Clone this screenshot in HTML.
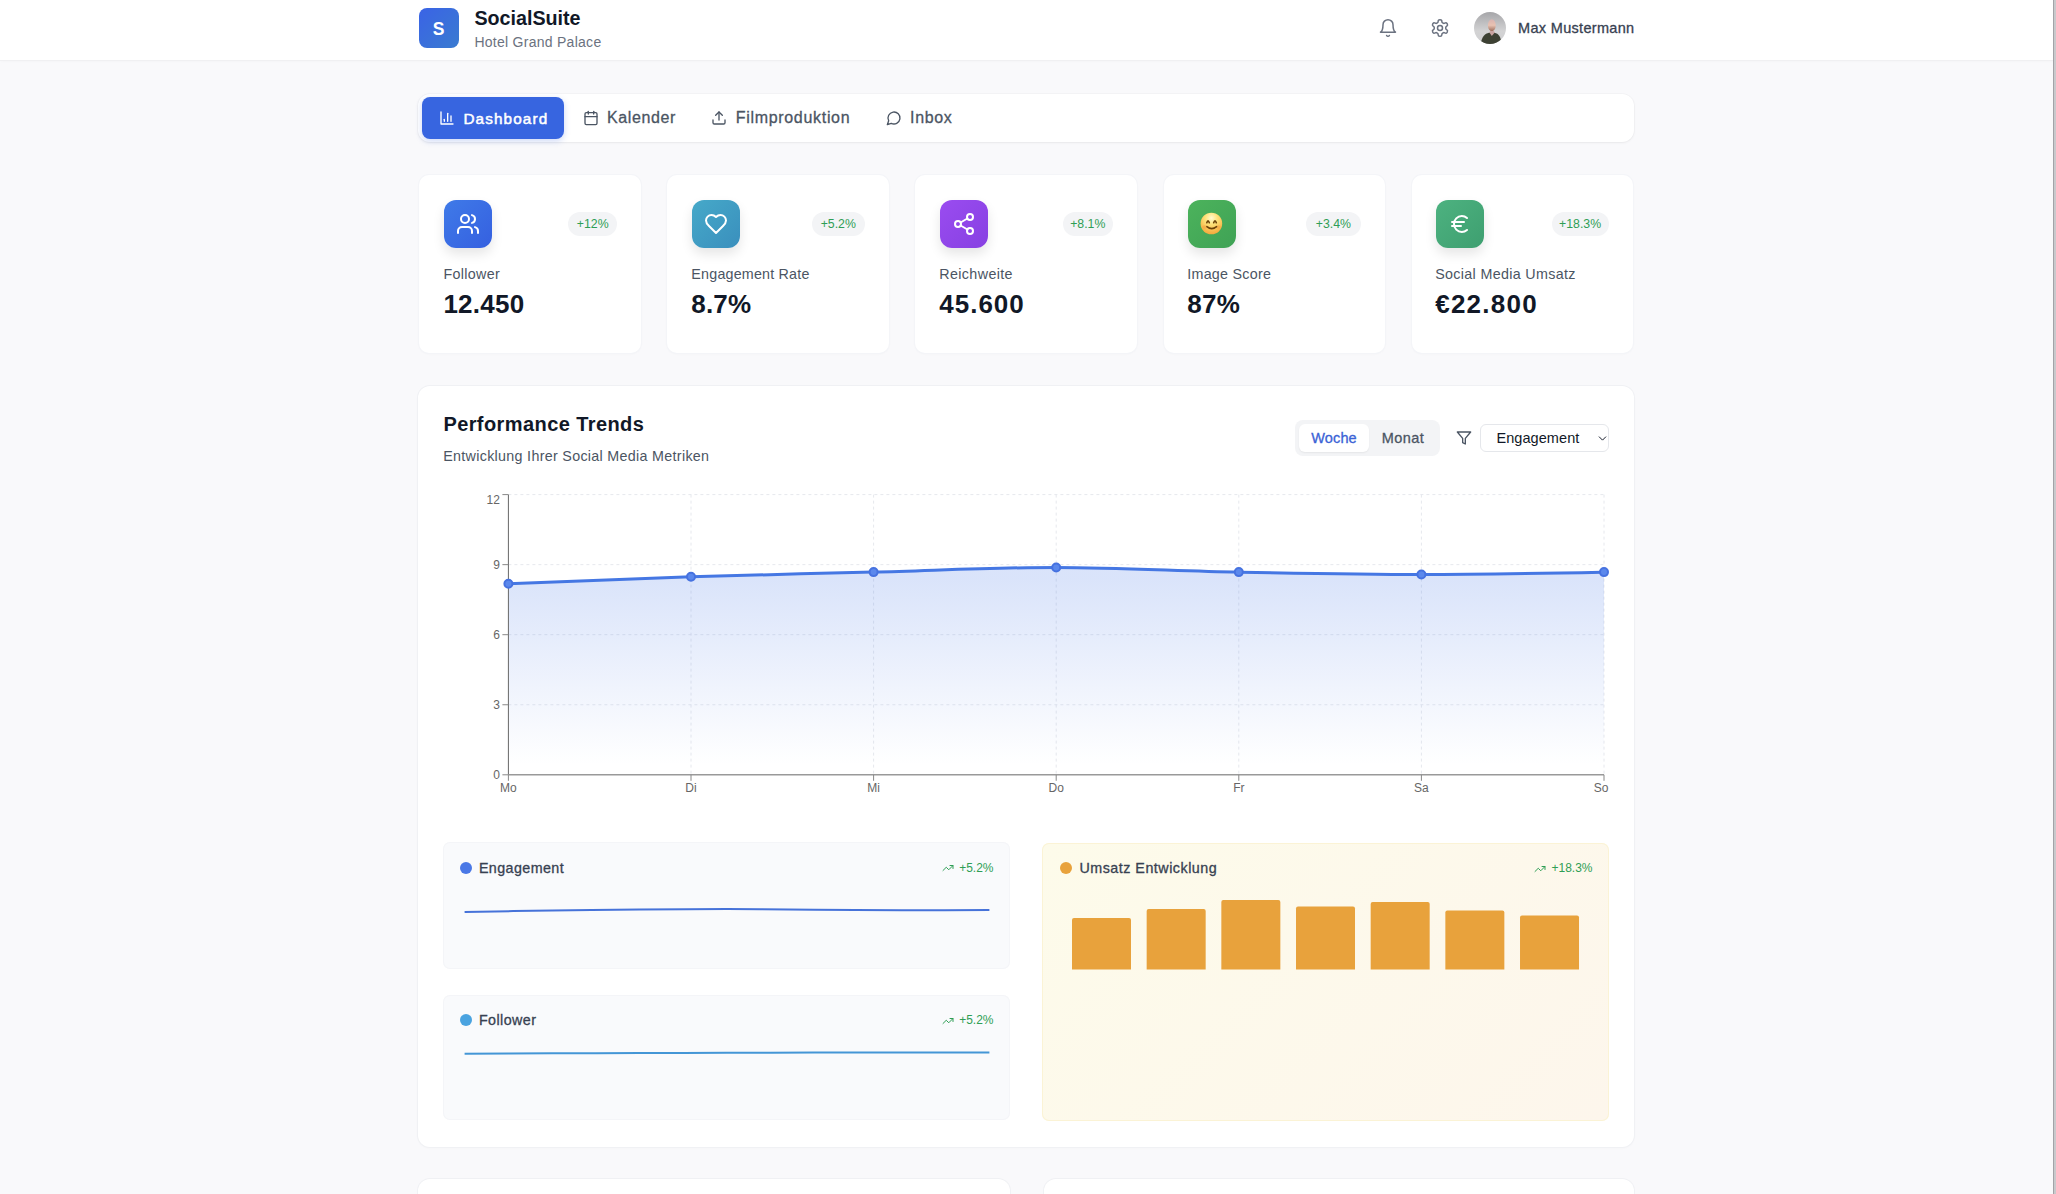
<!DOCTYPE html>
<html><head><meta charset="utf-8"><style>
html,body{margin:0;padding:0;}
body{width:2056px;height:1194px;overflow:hidden;background:#f9f9fb;font-family:"Liberation Sans",sans-serif;position:relative;}
.t{position:absolute;white-space:nowrap;}
.b{position:absolute;}
</style></head><body>
<div class="b" style="left:0px;top:0px;width:2056px;height:60px;background:#fff;box-shadow:0 1px 3px rgba(0,0,0,0.03);"></div>
<div class="b" style="left:0px;top:60px;width:2056px;height:1px;background:#f0f0f2;"></div>
<div class="b" style="left:419px;top:8px;width:40px;height:40px;border-radius:8px;background:linear-gradient(135deg,#3a63e6,#3a7bd0);"></div>
<div class="t" style="left:238.50px;width:400px;text-align:center;top:17.53px;font-size:17.5px;line-height:22px;font-weight:700;color:#fff;">S</div>
<div class="t" style="left:474.40px;top:6.17px;font-size:19.7px;line-height:25px;font-weight:700;color:#111827;">SocialSuite</div>
<div class="t" style="left:474.40px;top:33.15px;font-size:14px;line-height:18px;font-weight:400;color:#6b7280;letter-spacing:0.271px;">Hotel Grand Palace</div>
<svg class="b" style="left:1378px;top:18px;width:20px;height:20px;color:#6b7280" viewBox="0 0 24 24" fill="none" stroke="currentColor" stroke-width="1.8" stroke-linecap="round" stroke-linejoin="round"><path d="M6 8a6 6 0 0 1 12 0c0 7 3 9 3 9H3s3-2 3-9"/><path d="M10.3 21a1.94 1.94 0 0 0 3.4 0"/></svg>
<svg class="b" style="left:1430px;top:18px;width:20px;height:20px;color:#6b7280" viewBox="0 0 24 24" fill="none" stroke="currentColor" stroke-width="1.8" stroke-linecap="round" stroke-linejoin="round"><path d="M12.22 2h-.44a2 2 0 0 0-2 2v.18a2 2 0 0 1-1 1.73l-.43.25a2 2 0 0 1-2 0l-.15-.08a2 2 0 0 0-2.73.73l-.22.38a2 2 0 0 0 .73 2.73l.15.1a2 2 0 0 1 1 1.72v.51a2 2 0 0 1-1 1.74l-.15.09a2 2 0 0 0-.73 2.73l.22.38a2 2 0 0 0 2.73.73l.15-.08a2 2 0 0 1 2 0l.43.25a2 2 0 0 1 1 1.73V20a2 2 0 0 0 2 2h.44a2 2 0 0 0 2-2v-.18a2 2 0 0 1 1-1.73l.43-.25a2 2 0 0 1 2 0l.15.08a2 2 0 0 0 2.73-.73l.22-.39a2 2 0 0 0-.73-2.73l-.15-.08a2 2 0 0 1-1-1.74v-.5a2 2 0 0 1 1-1.74l.15-.09a2 2 0 0 0 .73-2.73l-.22-.38a2 2 0 0 0-2.73-.73l-.15.08a2 2 0 0 1-2 0l-.43-.25a2 2 0 0 1-1-1.73V4a2 2 0 0 0-2-2z"/><circle cx="12" cy="12" r="3"/></svg>
<svg class="b" style="left:1474px;top:12px;width:32px;height:32px" viewBox="0 0 32 32">
<defs><linearGradient id="av" x1="0" y1="0" x2="0" y2="1"><stop offset="0" stop-color="#a6a6a9"/><stop offset="0.6" stop-color="#d3d3d4"/><stop offset="1" stop-color="#cfcfd1"/></linearGradient>
<linearGradient id="hd" x1="0" y1="0" x2="0" y2="1"><stop offset="0" stop-color="#d9b3b0"/><stop offset="0.5" stop-color="#e8c2b2"/><stop offset="1" stop-color="#9a6a58"/></linearGradient>
<clipPath id="avc"><circle cx="16" cy="16" r="16"/></clipPath></defs>
<g clip-path="url(#avc)"><rect width="32" height="32" fill="url(#av)"/>
<ellipse cx="17.8" cy="13.3" rx="3.9" ry="6.1" fill="url(#hd)"/>
<path d="M6.5 34 C7 26 10.5 21.5 15 20.8 L20.5 20.8 C25 21.5 27.5 26 27.5 34 Z" fill="#3d4133"/>
<path d="M15.2 20.2 L17.8 24 L21 20.2 L19.5 19 L16.5 19 Z" fill="#c9a3a0"/></g></svg>
<div class="t" style="left:1518.10px;top:18.77px;font-size:14.5px;line-height:18px;font-weight:400;color:#374151;-webkit-text-stroke:0.3px #374151;letter-spacing:0.308px;">Max Mustermann</div>
<div class="b" style="left:418px;top:94px;width:1216px;height:48px;background:#fff;border-radius:12px;box-shadow:0 0 0 1px rgba(0,0,0,0.018), 0 1px 3px rgba(0,0,0,0.05);"></div>
<div class="b" style="left:422px;top:97px;width:142px;height:42px;background:#3765e0;border-radius:8px;box-shadow:0 2px 6px rgba(55,101,224,0.25);"></div>
<svg class="b" style="left:439px;top:110px;width:16px;height:16px;color:#fff" viewBox="0 0 24 24" fill="none" stroke="currentColor" stroke-width="2" stroke-linecap="round" stroke-linejoin="round"><path d="M3 3v18h18"/><path d="M18 17V9"/><path d="M13 17V5"/><path d="M8 17v-3"/></svg>
<div class="t" style="left:463.40px;top:108.60px;font-size:15.3px;line-height:19px;font-weight:400;color:#fff;-webkit-text-stroke:0.5px #fff;letter-spacing:1.125px;">Dashboard</div>
<svg class="b" style="left:582.5px;top:110px;width:16px;height:16px;color:#4b5563" viewBox="0 0 24 24" fill="none" stroke="currentColor" stroke-width="2" stroke-linecap="round" stroke-linejoin="round"><rect width="18" height="18" x="3" y="4" rx="2" ry="2"/><line x1="16" x2="16" y1="2" y2="6"/><line x1="8" x2="8" y1="2" y2="6"/><line x1="3" x2="21" y1="10" y2="10"/></svg>
<div class="t" style="left:606.90px;top:107.85px;font-size:16px;line-height:20px;font-weight:400;color:#4b5563;-webkit-text-stroke:0.3px #4b5563;letter-spacing:0.643px;">Kalender</div>
<svg class="b" style="left:711px;top:110px;width:16px;height:16px;color:#4b5563" viewBox="0 0 24 24" fill="none" stroke="currentColor" stroke-width="2" stroke-linecap="round" stroke-linejoin="round"><path d="M21 15v4a2 2 0 0 1-2 2H5a2 2 0 0 1-2-2v-4"/><polyline points="17 8 12 3 7 8"/><line x1="12" x2="12" y1="3" y2="15"/></svg>
<div class="t" style="left:735.70px;top:107.85px;font-size:16px;line-height:20px;font-weight:400;color:#4b5563;-webkit-text-stroke:0.3px #4b5563;letter-spacing:0.692px;">Filmproduktion</div>
<svg class="b" style="left:886px;top:110px;width:16px;height:16px;color:#4b5563" viewBox="0 0 24 24" fill="none" stroke="currentColor" stroke-width="2" stroke-linecap="round" stroke-linejoin="round"><path d="M7.9 20A9 9 0 1 0 4 16.1L2 22Z"/></svg>
<div class="t" style="left:910.10px;top:107.85px;font-size:16px;line-height:20px;font-weight:400;color:#4b5563;-webkit-text-stroke:0.3px #4b5563;letter-spacing:0.625px;">Inbox</div>
<div class="b" style="left:419.0px;top:175px;width:221.5px;height:178px;background:#fff;border-radius:10px;box-shadow:0 0 0 1px #f4f5f8, 0 1px 3px rgba(0,0,0,0.03);"></div>
<div class="b" style="left:444.0px;top:200px;width:48px;height:48px;border-radius:12px;background:linear-gradient(135deg,#3f7ae8,#3560e0);box-shadow:0 6px 12px rgba(0,0,0,0.10);"></div>
<svg class="b" style="left:456.0px;top:212px;width:24px;height:24px;color:#fff" viewBox="0 0 24 24" fill="none" stroke="currentColor" stroke-width="2" stroke-linecap="round" stroke-linejoin="round"><path d="M16 21v-2a4 4 0 0 0-4-4H6a4 4 0 0 0-4 4v2"/><circle cx="9" cy="7" r="4"/><path d="M22 21v-2a4 4 0 0 0-3-3.87"/><path d="M16 3.13a4 4 0 0 1 0 7.75"/></svg>
<div class="b" style="left:568.2px;top:212px;width:49px;height:24px;background:#f3f4f6;border-radius:12px;"></div>
<div class="t" style="left:392.70px;width:400px;text-align:center;top:217.24px;font-size:12.3px;line-height:15px;font-weight:400;color:#2f9e55;">+12%</div>
<div class="t" style="left:443.40px;top:265.04px;font-size:14.3px;line-height:18px;font-weight:400;color:#4b5563;letter-spacing:0.343px;">Follower</div>
<div class="t" style="left:443.40px;top:288.19px;font-size:26px;line-height:32px;font-weight:700;color:#111827;letter-spacing:0.240px;">12.450</div>
<div class="b" style="left:667.2px;top:175px;width:221.5px;height:178px;background:#fff;border-radius:10px;box-shadow:0 0 0 1px #f4f5f8, 0 1px 3px rgba(0,0,0,0.03);"></div>
<div class="b" style="left:691.95px;top:200px;width:48px;height:48px;border-radius:12px;background:linear-gradient(135deg,#46a9c9,#3a8fbd);box-shadow:0 6px 12px rgba(0,0,0,0.10);"></div>
<svg class="b" style="left:703.95px;top:212px;width:24px;height:24px;color:#fff" viewBox="0 0 24 24" fill="none" stroke="currentColor" stroke-width="2" stroke-linecap="round" stroke-linejoin="round"><path d="M19 14c1.49-1.46 3-3.21 3-5.5A5.5 5.5 0 0 0 16.5 3c-1.76 0-3 .5-4.5 2-1.5-1.5-2.74-2-4.5-2A5.5 5.5 0 0 0 2 8.5c0 2.3 1.5 4.05 3 5.5l7 7Z"/></svg>
<div class="b" style="left:811.5500000000001px;top:212px;width:53.5px;height:24px;background:#f3f4f6;border-radius:12px;"></div>
<div class="t" style="left:638.30px;width:400px;text-align:center;top:217.24px;font-size:12.3px;line-height:15px;font-weight:400;color:#2f9e55;">+5.2%</div>
<div class="t" style="left:691.35px;top:265.04px;font-size:14.3px;line-height:18px;font-weight:400;color:#4b5563;letter-spacing:0.200px;">Engagement Rate</div>
<div class="t" style="left:691.35px;top:288.19px;font-size:26px;line-height:32px;font-weight:700;color:#111827;letter-spacing:0.167px;">8.7%</div>
<div class="b" style="left:915.4px;top:175px;width:221.5px;height:178px;background:#fff;border-radius:10px;box-shadow:0 0 0 1px #f4f5f8, 0 1px 3px rgba(0,0,0,0.03);"></div>
<div class="b" style="left:939.9px;top:200px;width:48px;height:48px;border-radius:12px;background:linear-gradient(135deg,#9a4cf0,#8740e2);box-shadow:0 6px 12px rgba(0,0,0,0.10);"></div>
<svg class="b" style="left:951.9px;top:212px;width:24px;height:24px;color:#fff" viewBox="0 0 24 24" fill="none" stroke="currentColor" stroke-width="2" stroke-linecap="round" stroke-linejoin="round"><circle cx="18" cy="5" r="3"/><circle cx="6" cy="12" r="3"/><circle cx="18" cy="19" r="3"/><line x1="8.59" x2="15.42" y1="13.51" y2="17.49"/><line x1="15.41" x2="8.59" y1="6.51" y2="10.49"/></svg>
<div class="b" style="left:1062.6000000000001px;top:212px;width:50.3px;height:24px;background:#f3f4f6;border-radius:12px;"></div>
<div class="t" style="left:887.75px;width:400px;text-align:center;top:217.24px;font-size:12.3px;line-height:15px;font-weight:400;color:#2f9e55;">+8.1%</div>
<div class="t" style="left:939.30px;top:265.04px;font-size:14.3px;line-height:18px;font-weight:400;color:#4b5563;letter-spacing:0.367px;">Reichweite</div>
<div class="t" style="left:939.30px;top:288.19px;font-size:26px;line-height:32px;font-weight:700;color:#111827;letter-spacing:0.980px;">45.600</div>
<div class="b" style="left:1163.6px;top:175px;width:221.5px;height:178px;background:#fff;border-radius:10px;box-shadow:0 0 0 1px #f4f5f8, 0 1px 3px rgba(0,0,0,0.03);"></div>
<div class="b" style="left:1187.85px;top:200px;width:48px;height:48px;border-radius:12px;background:linear-gradient(135deg,#4cb35c,#3fa255);box-shadow:0 6px 12px rgba(0,0,0,0.10);"></div>
<svg class="b" style="left:1199.85px;top:212px;width:24px;height:24px" viewBox="0 0 24 24">
<defs><radialGradient id="sm" cx="50%" cy="25%" r="80%"><stop offset="0" stop-color="#fffbd0"/><stop offset="0.35" stop-color="#fde37a"/><stop offset="0.8" stop-color="#f6b548"/><stop offset="1" stop-color="#f0a43a"/></radialGradient></defs>
<circle cx="11.4" cy="11.5" r="10.8" fill="url(#sm)"/>
<ellipse cx="4.6" cy="15" rx="2.4" ry="1.8" fill="#f59a3c" opacity="0.45"/><ellipse cx="18.4" cy="15" rx="2.4" ry="1.8" fill="#f59a3c" opacity="0.45"/>
<path d="M6.8 10.8 Q8 6.6 9.3 10.8" stroke="#6b4208" stroke-width="1.6" fill="none" stroke-linecap="round"/>
<path d="M13.7 10.8 Q15 6.6 16.3 10.8" stroke="#6b4208" stroke-width="1.6" fill="none" stroke-linecap="round"/>
<path d="M6.9 14.6 Q11.7 18.6 16.6 14.6" stroke="#6b4208" stroke-width="1.5" fill="none" stroke-linecap="round"/></svg>
<div class="b" style="left:1306.15px;top:212px;width:54.6px;height:24px;background:#f3f4f6;border-radius:12px;"></div>
<div class="t" style="left:1133.45px;width:400px;text-align:center;top:217.24px;font-size:12.3px;line-height:15px;font-weight:400;color:#2f9e55;">+3.4%</div>
<div class="t" style="left:1187.25px;top:265.04px;font-size:14.3px;line-height:18px;font-weight:400;color:#4b5563;letter-spacing:0.260px;">Image Score</div>
<div class="t" style="left:1187.25px;top:288.19px;font-size:26px;line-height:32px;font-weight:700;color:#111827;letter-spacing:0.250px;">87%</div>
<div class="b" style="left:1411.8px;top:175px;width:221.5px;height:178px;background:#fff;border-radius:10px;box-shadow:0 0 0 1px #f4f5f8, 0 1px 3px rgba(0,0,0,0.03);"></div>
<div class="b" style="left:1435.8px;top:200px;width:48px;height:48px;border-radius:12px;background:linear-gradient(135deg,#4db280,#3e9f70);box-shadow:0 6px 12px rgba(0,0,0,0.10);"></div>
<svg class="b" style="left:1447.8px;top:212px;width:24px;height:24px;color:#fff" viewBox="0 0 24 24" fill="none" stroke="currentColor" stroke-width="2" stroke-linecap="round" stroke-linejoin="round"><path d="M4 10h12"/><path d="M4 14h9"/><path d="M19 6a7.7 7.7 0 0 0-5.2-2A7.9 7.9 0 0 0 6 12c0 4.4 3.5 8 7.8 8 2 0 3.8-.8 5.2-2"/></svg>
<div class="b" style="left:1551.6px;top:212px;width:57px;height:24px;background:#f3f4f6;border-radius:12px;"></div>
<div class="t" style="left:1380.10px;width:400px;text-align:center;top:217.24px;font-size:12.3px;line-height:15px;font-weight:400;color:#2f9e55;">+18.3%</div>
<div class="t" style="left:1435.20px;top:265.04px;font-size:14.3px;line-height:18px;font-weight:400;color:#4b5563;letter-spacing:0.333px;">Social Media Umsatz</div>
<div class="t" style="left:1435.20px;top:288.19px;font-size:26px;line-height:32px;font-weight:700;color:#111827;letter-spacing:1.250px;">€22.800</div>
<div class="b" style="left:418px;top:386px;width:1216px;height:761px;background:#fff;border-radius:12px;box-shadow:0 0 0 1px #f0f1f4, 0 1px 3px rgba(0,0,0,0.03);"></div>
<div class="t" style="left:443.40px;top:411.57px;font-size:20px;line-height:25px;font-weight:700;color:#111827;letter-spacing:0.412px;">Performance Trends</div>
<div class="t" style="left:443.20px;top:446.94px;font-size:14.3px;line-height:18px;font-weight:400;color:#4b5563;letter-spacing:0.305px;">Entwicklung Ihrer Social Media Metriken</div>
<div class="b" style="left:1295px;top:420px;width:145px;height:36px;background:#f3f4f6;border-radius:8px;"></div>
<div class="b" style="left:1299px;top:424px;width:70px;height:28px;background:#fff;border-radius:6px;box-shadow:0 1px 2px rgba(0,0,0,0.06);"></div>
<div class="t" style="left:1134.06px;width:400px;text-align:center;top:428.87px;font-size:14.5px;line-height:18px;font-weight:400;color:#3b63d6;-webkit-text-stroke:0.3px #3b63d6;letter-spacing:0.125px;">Woche</div>
<div class="t" style="left:1203.00px;width:400px;text-align:center;top:428.87px;font-size:14.5px;line-height:18px;font-weight:400;color:#4b5563;-webkit-text-stroke:0.3px #4b5563;letter-spacing:0.400px;">Monat</div>
<svg class="b" style="left:1455.7px;top:429.6px;width:16px;height:16px;color:#4b5563" viewBox="0 0 24 24" fill="none" stroke="currentColor" stroke-width="2" stroke-linecap="round" stroke-linejoin="round"><polygon points="22 3 2 3 10 12.46 10 19 14 21 14 12.46 22 3"/></svg>
<div class="b" style="left:1480px;top:424px;width:129px;height:28px;background:#fff;border:1px solid #e5e7eb;border-radius:6px;box-sizing:border-box;"></div>
<div class="t" style="left:1496.40px;top:428.87px;font-size:14.5px;line-height:18px;font-weight:400;color:#111827;letter-spacing:0.078px;">Engagement</div>
<svg class="b" style="left:1595.5px;top:431.5px;width:13px;height:13px;color:#111827" viewBox="0 0 24 24" fill="none" stroke="currentColor" stroke-width="1.8" stroke-linecap="round" stroke-linejoin="round"><path d="m6 9 6 6 6-6"/></svg>
<svg class="b" style="left:0;top:0;width:2056px;height:1194px" viewBox="0 0 2056 1194">
<defs><linearGradient id="ag" x1="0" y1="0" x2="0" y2="1"><stop offset="0.05" stop-color="#3b6fe6" stop-opacity="0.19"/><stop offset="0.95" stop-color="#3b6fe6" stop-opacity="0"/></linearGradient></defs>
<line x1="508.4" x2="1604" y1="704.75" y2="704.75" stroke="#e6e8ed" stroke-dasharray="3 3"/><line x1="508.4" x2="1604" y1="634.70" y2="634.70" stroke="#e6e8ed" stroke-dasharray="3 3"/><line x1="508.4" x2="1604" y1="564.65" y2="564.65" stroke="#e6e8ed" stroke-dasharray="3 3"/><line x1="508.4" x2="1604" y1="494.60" y2="494.60" stroke="#e6e8ed" stroke-dasharray="3 3"/><line x1="691.00" x2="691.00" y1="494.60" y2="774.8" stroke="#e6e8ed" stroke-dasharray="3 3"/><line x1="873.60" x2="873.60" y1="494.60" y2="774.8" stroke="#e6e8ed" stroke-dasharray="3 3"/><line x1="1056.20" x2="1056.20" y1="494.60" y2="774.8" stroke="#e6e8ed" stroke-dasharray="3 3"/><line x1="1238.80" x2="1238.80" y1="494.60" y2="774.8" stroke="#e6e8ed" stroke-dasharray="3 3"/><line x1="1421.40" x2="1421.40" y1="494.60" y2="774.8" stroke="#e6e8ed" stroke-dasharray="3 3"/><line x1="1604.00" x2="1604.00" y1="494.60" y2="774.8" stroke="#e6e8ed" stroke-dasharray="3 3"/>
<path d="M508.40,583.78C569.27,581.25,630.13,578.72,691.00,576.78C751.87,574.83,812.73,573.66,873.60,572.11C934.47,570.55,995.33,567.44,1056.20,567.44C1117.07,567.44,1177.93,570.94,1238.80,572.11C1299.67,573.27,1360.53,574.44,1421.40,574.44C1482.27,574.44,1543.13,573.27,1604.00,572.11L1604.00,774.80L508.40,774.80Z" fill="url(#ag)"/>
<line x1="508.4" x2="508.4" y1="494.60" y2="774.8" stroke="#666"/>
<line x1="508.4" x2="1604" y1="774.8" y2="774.8" stroke="#999" stroke-width="1.5"/>
<line x1="502.4" x2="508.4" y1="774.80" y2="774.80" stroke="#888"/><line x1="502.4" x2="508.4" y1="704.75" y2="704.75" stroke="#888"/><line x1="502.4" x2="508.4" y1="634.70" y2="634.70" stroke="#888"/><line x1="502.4" x2="508.4" y1="564.65" y2="564.65" stroke="#888"/><line x1="502.4" x2="508.4" y1="494.60" y2="494.60" stroke="#888"/><line x1="508.40" x2="508.40" y1="774.8" y2="780.8" stroke="#888"/><line x1="691.00" x2="691.00" y1="774.8" y2="780.8" stroke="#888"/><line x1="873.60" x2="873.60" y1="774.8" y2="780.8" stroke="#888"/><line x1="1056.20" x2="1056.20" y1="774.8" y2="780.8" stroke="#888"/><line x1="1238.80" x2="1238.80" y1="774.8" y2="780.8" stroke="#888"/><line x1="1421.40" x2="1421.40" y1="774.8" y2="780.8" stroke="#888"/><line x1="1604.00" x2="1604.00" y1="774.8" y2="780.8" stroke="#888"/>
<path d="M508.40,583.78C569.27,581.25,630.13,578.72,691.00,576.78C751.87,574.83,812.73,573.66,873.60,572.11C934.47,570.55,995.33,567.44,1056.20,567.44C1117.07,567.44,1177.93,570.94,1238.80,572.11C1299.67,573.27,1360.53,574.44,1421.40,574.44C1482.27,574.44,1543.13,573.27,1604.00,572.11" fill="none" stroke="#4577e3" stroke-width="3"/>
<circle cx="508.40" cy="583.78" r="4" fill="#5b88ec" stroke="#4672e0" stroke-width="2"/><circle cx="691.00" cy="576.78" r="4" fill="#5b88ec" stroke="#4672e0" stroke-width="2"/><circle cx="873.60" cy="572.11" r="4" fill="#5b88ec" stroke="#4672e0" stroke-width="2"/><circle cx="1056.20" cy="567.44" r="4" fill="#5b88ec" stroke="#4672e0" stroke-width="2"/><circle cx="1238.80" cy="572.11" r="4" fill="#5b88ec" stroke="#4672e0" stroke-width="2"/><circle cx="1421.40" cy="574.44" r="4" fill="#5b88ec" stroke="#4672e0" stroke-width="2"/><circle cx="1604.00" cy="572.11" r="4" fill="#5b88ec" stroke="#4672e0" stroke-width="2"/>
</svg>
<div class="t" style="right:1556.20px;top:768.24px;font-size:12px;line-height:15px;font-weight:400;color:#666;">0</div>
<div class="t" style="right:1556.20px;top:698.19px;font-size:12px;line-height:15px;font-weight:400;color:#666;">3</div>
<div class="t" style="right:1556.20px;top:628.14px;font-size:12px;line-height:15px;font-weight:400;color:#666;">6</div>
<div class="t" style="right:1556.20px;top:558.09px;font-size:12px;line-height:15px;font-weight:400;color:#666;">9</div>
<div class="t" style="right:1556.20px;top:492.64px;font-size:12px;line-height:15px;font-weight:400;color:#666;">12</div>
<div class="t" style="left:308.40px;width:400px;text-align:center;top:780.54px;font-size:12px;line-height:15px;font-weight:400;color:#666;">Mo</div>
<div class="t" style="left:491.00px;width:400px;text-align:center;top:780.54px;font-size:12px;line-height:15px;font-weight:400;color:#666;">Di</div>
<div class="t" style="left:673.60px;width:400px;text-align:center;top:780.54px;font-size:12px;line-height:15px;font-weight:400;color:#666;">Mi</div>
<div class="t" style="left:856.20px;width:400px;text-align:center;top:780.54px;font-size:12px;line-height:15px;font-weight:400;color:#666;">Do</div>
<div class="t" style="left:1038.80px;width:400px;text-align:center;top:780.54px;font-size:12px;line-height:15px;font-weight:400;color:#666;">Fr</div>
<div class="t" style="left:1221.40px;width:400px;text-align:center;top:780.54px;font-size:12px;line-height:15px;font-weight:400;color:#666;">Sa</div>
<div class="t" style="left:1401.00px;width:400px;text-align:center;top:780.54px;font-size:12px;line-height:15px;font-weight:400;color:#666;">So</div>
<div class="b" style="left:443px;top:842.4px;width:567px;height:126.2px;background:#f9fafc;border-radius:7px;box-shadow:inset 0 0 0 1px #f4f5f8;"></div>
<div class="b" style="left:460.0px;top:861.9px;width:12px;height:12px;background:#4a78e6;border-radius:6px;"></div>
<div class="t" style="left:478.90px;top:858.74px;font-size:14.3px;line-height:18px;font-weight:400;color:#374151;-webkit-text-stroke:0.3px #374151;letter-spacing:0.411px;">Engagement</div>
<svg class="b" style="left:941.6px;top:862.4px;width:12px;height:12px;color:#2f9e55" viewBox="0 0 24 24" fill="none" stroke="currentColor" stroke-width="2" stroke-linecap="round" stroke-linejoin="round"><polyline points="22 7 13.5 15.5 8.5 10.5 2 17"/><polyline points="16 7 22 7 22 13"/></svg>
<div class="t" style="right:1062.50px;top:860.74px;font-size:12px;line-height:15px;font-weight:400;color:#2f9e55;">+5.2%</div>
<div class="b" style="left:443px;top:994.7px;width:567px;height:125.6px;background:#f9fafc;border-radius:7px;box-shadow:inset 0 0 0 1px #f4f5f8;"></div>
<div class="b" style="left:460.0px;top:1014.2px;width:12px;height:12px;background:#4aa3e0;border-radius:6px;"></div>
<div class="t" style="left:478.90px;top:1011.04px;font-size:14.3px;line-height:18px;font-weight:400;color:#374151;-webkit-text-stroke:0.3px #374151;letter-spacing:0.429px;">Follower</div>
<svg class="b" style="left:941.6px;top:1014.7px;width:12px;height:12px;color:#2f9e55" viewBox="0 0 24 24" fill="none" stroke="currentColor" stroke-width="2" stroke-linecap="round" stroke-linejoin="round"><polyline points="22 7 13.5 15.5 8.5 10.5 2 17"/><polyline points="16 7 22 7 22 13"/></svg>
<div class="t" style="right:1062.50px;top:1013.04px;font-size:12px;line-height:15px;font-weight:400;color:#2f9e55;">+5.2%</div>
<div class="b" style="left:1042px;top:842.5px;width:567px;height:278.3px;background:linear-gradient(135deg,#fdfbea,#fdf6ec);border-radius:7px;box-shadow:inset 0 0 0 1px #fbf3d5;"></div>
<div class="b" style="left:1059.75px;top:862.0px;width:12px;height:12px;background:#e8a23c;border-radius:6px;"></div>
<div class="t" style="left:1079.40px;top:859.44px;font-size:14.3px;line-height:18px;font-weight:400;color:#374151;-webkit-text-stroke:0.3px #374151;letter-spacing:0.506px;">Umsatz Entwicklung</div>
<svg class="b" style="left:1534px;top:862.5px;width:12px;height:12px;color:#2f9e55" viewBox="0 0 24 24" fill="none" stroke="currentColor" stroke-width="2" stroke-linecap="round" stroke-linejoin="round"><polyline points="22 7 13.5 15.5 8.5 10.5 2 17"/><polyline points="16 7 22 7 22 13"/></svg>
<div class="t" style="right:463.50px;top:860.84px;font-size:12px;line-height:15px;font-weight:400;color:#2f9e55;">+18.3%</div>
<svg class="b" style="left:0;top:0;width:2056px;height:1194px" viewBox="0 0 2056 1194">
<path d="M464.60,912.00C493.76,911.46,522.91,910.92,552.07,910.50C581.22,910.08,610.38,909.75,639.53,909.50C668.69,909.25,697.84,909.00,727.00,909.00C756.16,909.00,785.31,909.58,814.47,909.80C843.62,910.02,872.78,910.30,901.93,910.30C931.09,910.30,960.24,910.15,989.40,910.00" fill="none" stroke="#4672d9" stroke-width="2"/>
<path d="M464.60,1053.80C493.76,1053.62,522.91,1053.43,552.07,1053.30C581.22,1053.17,610.38,1053.08,639.53,1053.00C668.69,1052.92,697.84,1052.87,727.00,1052.80C756.16,1052.73,785.31,1052.65,814.47,1052.60C843.62,1052.55,872.78,1052.50,901.93,1052.50C931.09,1052.50,960.24,1052.50,989.40,1052.50" fill="none" stroke="#4496d6" stroke-width="2"/>
<path d="M1072.00,969.5V920Q1072.00,918 1074.00,918H1129.00Q1131.00,918 1131.00,920V969.5Z" fill="#e8a23c"/><path d="M1146.67,969.5V911Q1146.67,909 1148.67,909H1203.67Q1205.67,909 1205.67,911V969.5Z" fill="#e8a23c"/><path d="M1221.34,969.5V902Q1221.34,900 1223.34,900H1278.34Q1280.34,900 1280.34,902V969.5Z" fill="#e8a23c"/><path d="M1296.01,969.5V908.5Q1296.01,906.5 1298.01,906.5H1353.01Q1355.01,906.5 1355.01,908.5V969.5Z" fill="#e8a23c"/><path d="M1370.68,969.5V904Q1370.68,902 1372.68,902H1427.68Q1429.68,902 1429.68,904V969.5Z" fill="#e8a23c"/><path d="M1445.35,969.5V912.5Q1445.35,910.5 1447.35,910.5H1502.35Q1504.35,910.5 1504.35,912.5V969.5Z" fill="#e8a23c"/><path d="M1520.02,969.5V917.5Q1520.02,915.5 1522.02,915.5H1577.02Q1579.02,915.5 1579.02,917.5V969.5Z" fill="#e8a23c"/>
</svg>
<div class="b" style="left:418px;top:1179px;width:592px;height:40px;background:#fff;border-radius:12px;box-shadow:0 0 0 1px #f0f1f4;"></div>
<div class="b" style="left:1044px;top:1179px;width:590px;height:40px;background:#fff;border-radius:12px;box-shadow:0 0 0 1px #f0f1f4;"></div>
<div class="b" style="left:2052.5px;top:0px;width:1.7px;height:1194px;background:#a3a3a7;"></div>
<div class="b" style="left:2054.2px;top:0px;width:1.8px;height:1194px;background:#c9c9cc;"></div>
</body></html>
